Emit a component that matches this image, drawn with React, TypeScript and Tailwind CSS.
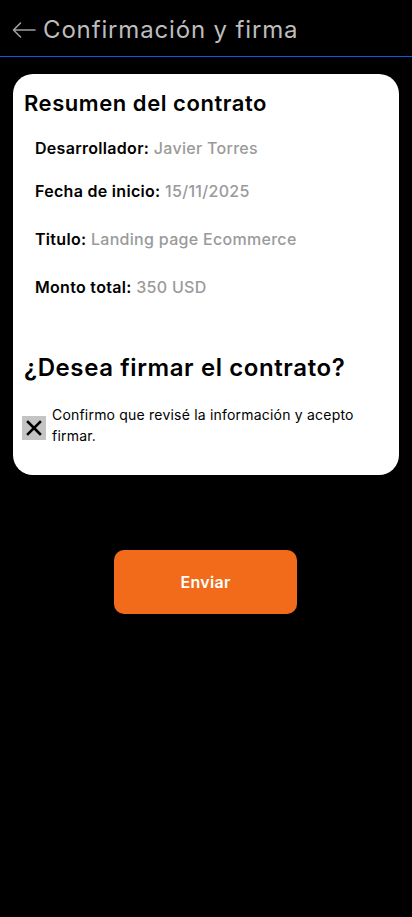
import React from "react";

export default function App() {
  return (
    <div
      className="w-[412px] h-[917px] bg-black flex flex-col"
      style={{ fontFamily: "Inter, 'Open Sans', sans-serif" }}
    >
      <header className="h-[57px] flex items-center pl-[12px] pt-[4px] border-b border-[#0a5ce8]">
        <svg width="24" height="16" viewBox="0 0 24 16" fill="none" stroke="#a0a0a0" strokeWidth="1.6" strokeLinecap="round" strokeLinejoin="round">
          <path d="M23 8H1.5M8.5 1L1.5 8l7 7" />
        </svg>
        <span className="ml-[7px] text-[24px] text-[#bdbdbd] tracking-[0.85px]">Confirmación y firma</span>
      </header>

      <div className="mx-[13px] mt-[17px] bg-white rounded-[20px] h-[401px] pl-[11px] pr-[10px] pt-[14px]">
        <h1 className="text-[22px] font-semibold text-black leading-[30px] tracking-[0.55px]">Resumen del contrato</h1>
        <div className="pl-[11px] mt-[20px] flex flex-col text-[16px] font-medium tracking-[0.3px]">
          <p className="h-[20px] leading-[20px]"><span className="text-black font-semibold">Desarrollador:</span> <span className="text-[#9a9a9a]">Javier Torres</span></p>
          <p className="mt-[23px] h-[20px] leading-[20px]"><span className="text-black font-semibold">Fecha de inicio:</span> <span className="text-[#9a9a9a]">15/11/2025</span></p>
          <p className="mt-[28px] h-[20px] leading-[20px]"><span className="text-black font-semibold">Titulo:</span> <span className="text-[#9a9a9a]">Landing page Ecommerce</span></p>
          <p className="mt-[28px] h-[20px] leading-[20px]"><span className="text-black font-semibold">Monto total:</span> <span className="text-[#9a9a9a]">350 USD</span></p>
        </div>
        <h2 className="mt-[56px] text-[24px] font-semibold text-black leading-[30px] tracking-[0.6px]">¿Desea firmar el contrato?</h2>
        <div className="mt-[21px] flex items-start">
          <div className="mt-[12px] w-[24px] h-[24px] bg-[#c4c4c4] flex items-center justify-center shrink-0 -ml-[2px]">
            <svg width="16" height="16" viewBox="0 0 16 16" stroke="#000" strokeWidth="2.6" strokeLinecap="square">
              <path d="M2 2l12 12M14 2L2 14" />
            </svg>
          </div>
          <p className="ml-[6px] text-[14px] leading-[21px] text-black tracking-[0.2px]">Confirmo que revisé la información y acepto firmar.</p>
        </div>
      </div>

      <div className="flex justify-center mt-[75px] pr-[1px]">
        <button className="w-[183px] h-[64px] rounded-[10px] bg-[#f26b1a] text-white text-[16px] font-semibold tracking-[0.3px]">
          Enviar
        </button>
      </div>
    </div>
  );
}
